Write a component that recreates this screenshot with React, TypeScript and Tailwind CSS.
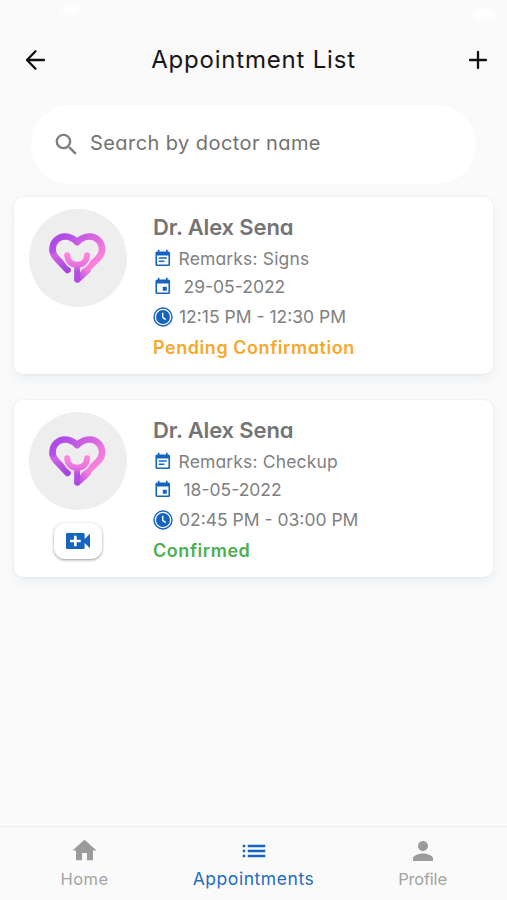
import React, { useId } from "react";
import {
  MdEvent,
  MdEventNote,
  MdHome,
  MdList,
  MdPerson,
  MdSearch,
  MdVideoCall,
} from "react-icons/md";

interface Appointment {
  id: number;
  doctor: string;
  remarks: string;
  date: string;
  time: string;
  status: "pending" | "confirmed";
}

const appointments: Appointment[] = [
  {
    id: 1,
    doctor: "Dr. Alex Sena",
    remarks: "Signs",
    date: "29-05-2022",
    time: "12:15 PM - 12:30 PM",
    status: "pending",
  },
  {
    id: 2,
    doctor: "Dr. Alex Sena",
    remarks: "Checkup",
    date: "18-05-2022",
    time: "02:45 PM - 03:00 PM",
    status: "confirmed",
  },
];

const HeartLogo: React.FC = () => {
  const id = useId();
  return (
    <svg viewBox="140 122 184 168" className="w-[61px] h-[56px]" fill="none">
      <defs>
        <linearGradient id={`${id}a`} gradientUnits="userSpaceOnUse" x1="190" y1="140" x2="280" y2="240">
          <stop offset="0" stopColor="#b04be6" />
          <stop offset="0.5" stopColor="#d868e0" />
          <stop offset="1" stopColor="#ff85dc" />
        </linearGradient>
        <linearGradient id={`${id}b`} gradientUnits="userSpaceOnUse" x1="165" y1="170" x2="200" y2="240">
          <stop offset="0" stopColor="#e070e4" />
          <stop offset="1" stopColor="#a844e2" />
        </linearGradient>
        <linearGradient id={`${id}c`} gradientUnits="userSpaceOnUse" x1="231" y1="195" x2="231" y2="275">
          <stop offset="0" stopColor="#ff85dc" />
          <stop offset="0.4" stopColor="#e873df" />
          <stop offset="0.65" stopColor="#b44ee3" />
          <stop offset="1" stopColor="#b04be6" />
        </linearGradient>
        <linearGradient id={`${id}d`} gradientUnits="userSpaceOnUse" x1="232" y1="272" x2="262" y2="242">
          <stop offset="0" stopColor="#b04be6" />
          <stop offset="1" stopColor="#f07ade" />
        </linearGradient>
      </defs>
      <g strokeWidth="20" strokeLinecap="round" strokeLinejoin="round">
        <path d="M157 184c1 9 5 16 11 22l34 36" stroke={`url(#${id}b)`} />
        <path
          d="M157 184c-2-25 15-43 38-43 15 0 25 6 36 17 11-11 22-17 37-17 23 0 40 19 38 43-1 9-5 16-11 22l-42 41"
          stroke={`url(#${id}a)`}
        />
        <path d="M232 270l30-27" stroke={`url(#${id}d)`} />
        {/* gap between the stethoscope and the heart outline */}
        <path d="M201 202c2 17 13 25 30 25s28-8 30-25" stroke="#eeeeee" strokeWidth="24" />
        <path d="M201 198c1 18 13 28 30 28s29-10 30-28M231 228v43" stroke={`url(#${id}c)`} strokeWidth="18" />
      </g>
    </svg>
  );
};

const ClockIcon: React.FC = () => (
  <svg viewBox="0 0 20 20" className="size-5" fill="none">
    <circle cx="10" cy="10" r="9" stroke="#1565c0" strokeWidth="1.4" />
    <circle cx="10" cy="10" r="7" fill="#1565c0" />
    <path d="M9.7 5.8v4.5l3 2.3" stroke="#fff" strokeWidth="1.4" />
  </svg>
);

const AppointmentCard: React.FC<{ appointment: Appointment }> = ({ appointment }) => {
  const { doctor, remarks, date, time, status } = appointment;
  const confirmed = status === "confirmed";

  return (
    <div className="flex h-[177px] rounded-[9px] bg-white shadow-[0_0_2px_rgba(90,110,130,0.14),0_5px_12px_rgba(120,160,190,0.12)]">
      <div className="flex w-[127px] flex-col items-center pt-3">
        <div className="flex size-[98px] items-center justify-center rounded-full bg-[#eeeeee]">
          <HeartLogo />
        </div>
        {confirmed && (
          <button
            type="button"
            aria-label="Start video call"
            className="mt-[13px] flex h-[36px] w-[48px] items-center justify-center rounded-[11px] bg-white shadow-[0_1px_3px_rgba(0,0,0,0.4)]"
          >
            <MdVideoCall className="size-8 text-[#1565c0]" />
          </button>
        )}
      </div>

      <div className="flex flex-col pl-[12px] pt-[14px] text-[17.5px] font-[370] text-[#808080]">
        <h2 className="flex h-8 items-center text-[22px] font-[560] tracking-[-0.15px] text-[#747474]">
          {doctor}
        </h2>
        <div className="flex h-8 items-center">
          <MdEventNote className="size-[19.5px] text-[#1565c0]" />
          <span className="ml-[6px] tracking-[0.15px]">Remarks: {remarks}</span>
        </div>
        <div className="flex h-6 items-center">
          <MdEvent className="size-[19.5px] text-[#1565c0]" />
          <span className="ml-[11px]">{date}</span>
        </div>
        <div className="flex h-9 items-center">
          <ClockIcon />
          <span className="ml-[6px]">{time}</span>
        </div>
        <p
          className={`flex h-6 items-center text-[18px] font-[560] tracking-[0.55px] ${
            confirmed ? "text-[#4caf50]" : "text-[#f9a72b]"
          }`}
        >
          {confirmed ? "Confirmed" : "Pending Confirmation"}
        </p>
      </div>
    </div>
  );
};

const App: React.FC = () => {
  return (
    <div className="flex h-[900px] w-[507px] flex-col overflow-hidden bg-[#fafafa] font-['Inter',sans-serif] [font-feature-settings:'cv11'] whitespace-nowrap">
      <div className="flex h-5 items-center justify-between pl-[62px] pr-[10px]">
        <span className="h-2 w-[18px] rounded-full bg-white blur-[2px]" />
        <span className="mt-2 h-2.5 w-6 rounded-full bg-white blur-[2px]" />
      </div>

      <header className="flex h-20 items-center pl-[25px] pr-[19px]">
        <svg viewBox="0 0 22 22" className="size-[22px]" fill="none" stroke="#111" strokeWidth="2.3" strokeLinecap="round" strokeLinejoin="round">
          <path d="M19 11H2M10.5 2.3 2 11l8.5 8.7" />
        </svg>
        <h1 className="flex-1 pr-[8px] text-center text-[24px] tracking-[0.8px] text-[#161616]">
          Appointment List
        </h1>
        <svg viewBox="0 0 20 20" className="size-5" stroke="#111" strokeWidth="2.3" strokeLinecap="round">
          <path d="M2 10h16M10 2v16" />
        </svg>
      </header>

      <div className="mx-[31px] mt-[5px] flex h-[79px] items-center rounded-[40px] bg-white pl-[21px]">
        <MdSearch className="size-[29px] text-[#808080]" />
        <span className="mb-[3px] ml-[9px] text-[20px] tracking-[0.43px] text-[#727272]">
          Search by doctor name
        </span>
      </div>

      <main className="flex flex-1 flex-col gap-[26px] px-[14px] pt-[13px]">
        {appointments.map((appointment) => (
          <AppointmentCard key={appointment.id} appointment={appointment} />
        ))}
      </main>

      <nav className="grid h-[74px] grid-cols-3 border-t border-[#eeeeee] text-[16.5px] text-[#a3a3a3]">
        <a className="flex flex-col items-center pt-[9px]">
          <MdHome className="size-[29px] text-[#9b9b9b]" />
          <span className="mt-[2px] tracking-[0.4px]">Home</span>
        </a>
        <a className="flex flex-col items-center pt-[9px] text-[#1f6cc3]">
          <MdList className="size-[30px] text-[#1565c0]" />
          <span className="text-[17.5px] tracking-[0.55px]">Appointments</span>
        </a>
        <a className="flex flex-col items-center pt-[9px]">
          <MdPerson className="size-[30px] text-[#9b9b9b]" />
          <span className="mt-px tracking-[-0.2px]">Profile</span>
        </a>
      </nav>
    </div>
  );
};

export default App;
